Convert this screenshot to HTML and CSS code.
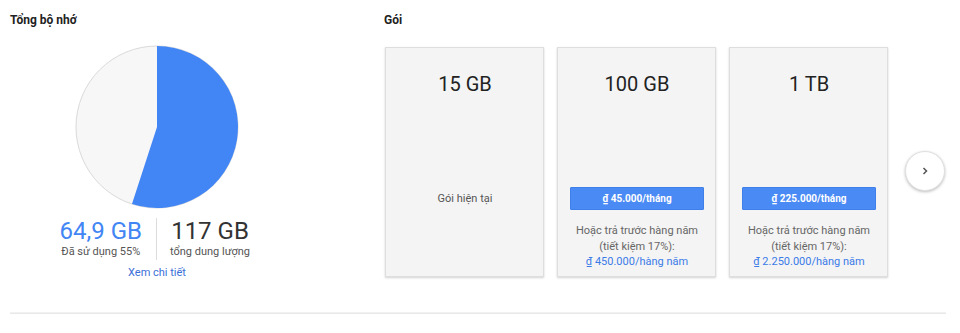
FILE: index.html
```html
<!DOCTYPE html>
<html lang="vi">
<head>
<meta charset="utf-8">
<title>Bộ nhớ</title>
<link rel="stylesheet" href="styles.css">
</head>
<body>
<div class="page">
  <div class="top">
    <section class="storage">
      <h2 class="title">Tổng bộ nhớ</h2>
      <div class="pie-wrap">
        <svg class="pie" width="164" height="164" viewBox="0 0 164 164">
          <circle cx="82" cy="82" r="81" fill="#f7f7f7" stroke="#dadada" stroke-width="1"/>
          <path d="M82 82 L82 1 A81 81 0 1 1 56.97 159.04 Z" fill="#4285f4"/>
        </svg>
      </div>
      <div class="stats">
        <div class="stat used">
          <div class="num blue">64,9 GB</div>
          <div class="label">Đã sử dụng 55%</div>
        </div>
        <div class="stat total">
          <div class="num">117 GB</div>
          <div class="label">tổng dung lượng</div>
        </div>
      </div>
      <a class="details" href="#">Xem chi tiết</a>
    </section>
    <section class="plans">
      <h2 class="title">Gói</h2>
      <div class="plan-row">
        <div class="card">
          <div class="size">15 GB</div>
          <div class="current">Gói hiện tại</div>
        </div>
        <div class="card">
          <div class="size">100 GB</div>
          <div class="btn">₫ 45.000/tháng</div>
          <div class="desc">Hoặc trả trước hàng năm<br>(tiết kiệm 17%):<br><span class="blue">₫ 450.000/hàng năm</span></div>
        </div>
        <div class="card">
          <div class="size">1 TB</div>
          <div class="btn">₫ 225.000/tháng</div>
          <div class="desc">Hoặc trả trước hàng năm<br>(tiết kiệm 17%):<br><span class="blue">₫ 2.250.000/hàng năm</span></div>
        </div>
        <button class="next" aria-label="Tiếp">
          <svg width="10" height="10" viewBox="0 0 10 10"><path d="M3.5 2 L6.5 5 L3.5 8" fill="none" stroke="#555" stroke-width="1.5"/></svg>
        </button>
      </div>
    </section>
  </div>
  <div class="rule"></div>
</div>
</body>
</html>
```

FILE: styles.css
```css
* { box-sizing: border-box; }
html, body { margin: 0; background: #fff; }
body {
  font-family: Roboto, "Noto Sans", Arial, sans-serif;
  color: #222;
}
.page {
  width: 960px;
  height: 333px;
  padding: 0 14px 0 10px;
}
.top { display: flex; }
.title {
  margin: 12px 0 0;
  font-size: 12px;
  line-height: 16px;
  font-weight: 700;
  color: #222;
}
.storage {
  width: 294px;
  display: flex;
  flex-direction: column;
}
.pie-wrap {
  display: flex;
  justify-content: center;
  margin-top: 17px;
}
.pie { display: block; }
.stats {
  display: grid;
  grid-template-columns: 1fr 1fr;
  margin-top: 9px;
}
.stat { text-align: center; }
.used {
  justify-self: end;
  padding-right: 14px;
  border-right: 1px solid #dcdcdc;
}
.total {
  justify-self: start;
  padding-left: 13px;
}
.num {
  font-size: 24px;
  line-height: 26px;
  color: #333;
}
.blue { color: #3b7be8; }
.num.blue { color: #4285f4; }
.label {
  font-size: 11px;
  line-height: 16px;
  color: #555;
}
.details {
  align-self: center;
  margin-top: 5px;
  font-size: 11px;
  line-height: 16px;
  color: #3b6fd9;
  text-decoration: none;
}
.plans { margin-left: 80px; }
.plan-row {
  display: flex;
  align-items: center;
  margin-top: 19px;
  margin-left: 1px;
}
.card {
  width: 159px;
  height: 230px;
  margin-right: 13px;
  background: #f4f4f4;
  border: 1px solid #dedede;
  box-shadow: 0 1px 2px rgba(0,0,0,0.18);
  padding: 24px 11px 0 12px;
  display: flex;
  flex-direction: column;
  text-align: center;
}
.card:nth-child(3) { margin-right: 17px; }
.size {
  font-size: 20px;
  line-height: 24px;
  color: #222;
}
.current {
  margin-top: 91px;
  font-size: 11px;
  line-height: 23px;
  color: #555;
}
.btn {
  margin-top: 91px;
  height: 23px;
  background: #4a8af4;
  border: 1px solid #3f7fe9;
  border-radius: 1px;
  color: #fff;
  font-size: 10px;
  font-weight: 700;
  line-height: 21px;
}
.desc {
  margin-top: 13px;
  font-size: 11px;
  line-height: 15.5px;
  color: #666;
}
.next {
  width: 40px;
  height: 40px;
  margin-top: 18px;
  border-radius: 50%;
  background: #fff;
  border: 1px solid #e0e0e0;
  box-shadow: 0 1px 3px rgba(0,0,0,0.25);
  display: flex;
  align-items: center;
  justify-content: center;
  padding: 0;
}
.rule {
  margin-top: 31px;
  height: 2px;
  background: #e8e8e8;
  border-top: 1px solid #f2f2f2;
}
```
